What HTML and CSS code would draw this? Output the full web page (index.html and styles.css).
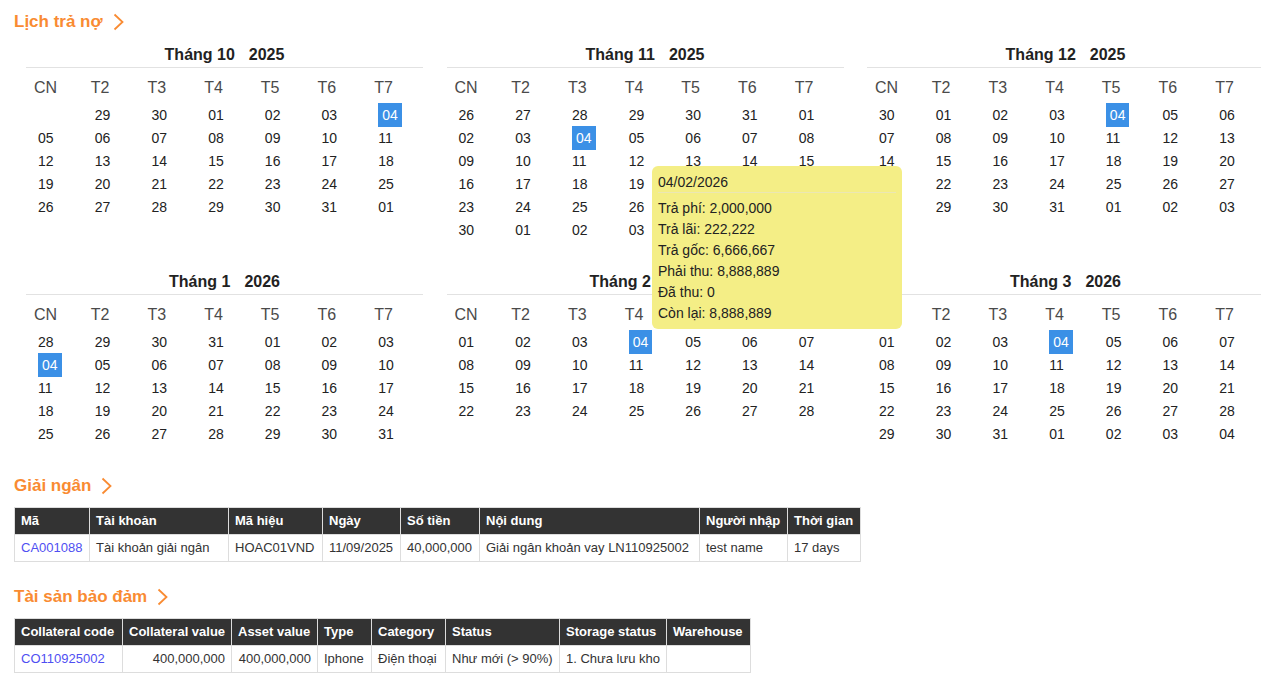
FILE: index.html
```html
<!DOCTYPE html>
<html lang="vi">
<head>
<meta charset="utf-8">
<title>Lịch trả nợ</title>
<link rel="stylesheet" href="styles.css">
</head>
<body>
<h2 class="sec-title">Lịch trả nợ <svg class="chev" width="11" height="18" viewBox="0 0 11 18"><polyline points="1.5,1.5 9.5,9 1.5,16.5" fill="none" stroke="currentColor" stroke-width="1.8"/></svg></h2>

<div class="cal-grid">
  <div class="month">
    <div class="m-title">Tháng 10<span class="yr">2025</span></div>
    <div class="wd"><span>CN</span><span>T2</span><span>T3</span><span>T4</span><span>T5</span><span>T6</span><span>T7</span></div>
    <div class="days">
      <span class="d"></span><span class="d">29</span><span class="d">30</span><span class="d">01</span><span class="d">02</span><span class="d">03</span><span class="d"><em class="hl">04</em></span>
      <span class="d">05</span><span class="d">06</span><span class="d">07</span><span class="d">08</span><span class="d">09</span><span class="d">10</span><span class="d">11</span>
      <span class="d">12</span><span class="d">13</span><span class="d">14</span><span class="d">15</span><span class="d">16</span><span class="d">17</span><span class="d">18</span>
      <span class="d">19</span><span class="d">20</span><span class="d">21</span><span class="d">22</span><span class="d">23</span><span class="d">24</span><span class="d">25</span>
      <span class="d">26</span><span class="d">27</span><span class="d">28</span><span class="d">29</span><span class="d">30</span><span class="d">31</span><span class="d">01</span>
    </div>
  </div>
  <div class="month">
    <div class="m-title">Tháng 11<span class="yr">2025</span></div>
    <div class="wd"><span>CN</span><span>T2</span><span>T3</span><span>T4</span><span>T5</span><span>T6</span><span>T7</span></div>
    <div class="days">
      <span class="d">26</span><span class="d">27</span><span class="d">28</span><span class="d">29</span><span class="d">30</span><span class="d">31</span><span class="d">01</span>
      <span class="d">02</span><span class="d">03</span><span class="d"><em class="hl">04</em></span><span class="d">05</span><span class="d">06</span><span class="d">07</span><span class="d">08</span>
      <span class="d">09</span><span class="d">10</span><span class="d">11</span><span class="d">12</span><span class="d">13</span><span class="d">14</span><span class="d">15</span>
      <span class="d">16</span><span class="d">17</span><span class="d">18</span><span class="d">19</span><span class="d">20</span><span class="d">21</span><span class="d">22</span>
      <span class="d">23</span><span class="d">24</span><span class="d">25</span><span class="d">26</span><span class="d">27</span><span class="d">28</span><span class="d">29</span>
      <span class="d">30</span><span class="d">01</span><span class="d">02</span><span class="d">03</span><span class="d">04</span><span class="d">05</span><span class="d">06</span>
    </div>
  </div>
  <div class="month">
    <div class="m-title">Tháng 12<span class="yr">2025</span></div>
    <div class="wd"><span>CN</span><span>T2</span><span>T3</span><span>T4</span><span>T5</span><span>T6</span><span>T7</span></div>
    <div class="days">
      <span class="d">30</span><span class="d">01</span><span class="d">02</span><span class="d">03</span><span class="d"><em class="hl">04</em></span><span class="d">05</span><span class="d">06</span>
      <span class="d">07</span><span class="d">08</span><span class="d">09</span><span class="d">10</span><span class="d">11</span><span class="d">12</span><span class="d">13</span>
      <span class="d">14</span><span class="d">15</span><span class="d">16</span><span class="d">17</span><span class="d">18</span><span class="d">19</span><span class="d">20</span>
      <span class="d">21</span><span class="d">22</span><span class="d">23</span><span class="d">24</span><span class="d">25</span><span class="d">26</span><span class="d">27</span>
      <span class="d">28</span><span class="d">29</span><span class="d">30</span><span class="d">31</span><span class="d">01</span><span class="d">02</span><span class="d">03</span>
    </div>
  </div>
  <div class="month">
    <div class="m-title">Tháng 1<span class="yr">2026</span></div>
    <div class="wd"><span>CN</span><span>T2</span><span>T3</span><span>T4</span><span>T5</span><span>T6</span><span>T7</span></div>
    <div class="days">
      <span class="d">28</span><span class="d">29</span><span class="d">30</span><span class="d">31</span><span class="d">01</span><span class="d">02</span><span class="d">03</span>
      <span class="d"><em class="hl">04</em></span><span class="d">05</span><span class="d">06</span><span class="d">07</span><span class="d">08</span><span class="d">09</span><span class="d">10</span>
      <span class="d">11</span><span class="d">12</span><span class="d">13</span><span class="d">14</span><span class="d">15</span><span class="d">16</span><span class="d">17</span>
      <span class="d">18</span><span class="d">19</span><span class="d">20</span><span class="d">21</span><span class="d">22</span><span class="d">23</span><span class="d">24</span>
      <span class="d">25</span><span class="d">26</span><span class="d">27</span><span class="d">28</span><span class="d">29</span><span class="d">30</span><span class="d">31</span>
    </div>
  </div>
  <div class="month">
    <div class="m-title">Tháng 2<span class="yr">2026</span></div>
    <div class="wd"><span>CN</span><span>T2</span><span>T3</span><span>T4</span><span>T5</span><span>T6</span><span>T7</span></div>
    <div class="days">
      <span class="d">01</span><span class="d">02</span><span class="d">03</span><span class="d"><em class="hl">04</em></span><span class="d">05</span><span class="d">06</span><span class="d">07</span>
      <span class="d">08</span><span class="d">09</span><span class="d">10</span><span class="d">11</span><span class="d">12</span><span class="d">13</span><span class="d">14</span>
      <span class="d">15</span><span class="d">16</span><span class="d">17</span><span class="d">18</span><span class="d">19</span><span class="d">20</span><span class="d">21</span>
      <span class="d">22</span><span class="d">23</span><span class="d">24</span><span class="d">25</span><span class="d">26</span><span class="d">27</span><span class="d">28</span>
    </div>
  </div>
  <div class="month">
    <div class="m-title">Tháng 3<span class="yr">2026</span></div>
    <div class="wd"><span>CN</span><span>T2</span><span>T3</span><span>T4</span><span>T5</span><span>T6</span><span>T7</span></div>
    <div class="days">
      <span class="d">01</span><span class="d">02</span><span class="d">03</span><span class="d"><em class="hl">04</em></span><span class="d">05</span><span class="d">06</span><span class="d">07</span>
      <span class="d">08</span><span class="d">09</span><span class="d">10</span><span class="d">11</span><span class="d">12</span><span class="d">13</span><span class="d">14</span>
      <span class="d">15</span><span class="d">16</span><span class="d">17</span><span class="d">18</span><span class="d">19</span><span class="d">20</span><span class="d">21</span>
      <span class="d">22</span><span class="d">23</span><span class="d">24</span><span class="d">25</span><span class="d">26</span><span class="d">27</span><span class="d">28</span>
      <span class="d">29</span><span class="d">30</span><span class="d">31</span><span class="d">01</span><span class="d">02</span><span class="d">03</span><span class="d">04</span>
    </div>
  </div>
</div>

<div class="tooltip">
  <div class="tt-date">04/02/2026</div>
  <div class="tt-line">Trả phí: 2,000,000</div>
  <div class="tt-line">Trả lãi: 222,222</div>
  <div class="tt-line">Trả gốc: 6,666,667</div>
  <div class="tt-line">Phải thu: 8,888,889</div>
  <div class="tt-line">Đã thu: 0</div>
  <div class="tt-line">Còn lại: 8,888,889</div>
</div>

<h2 class="sec-title">Giải ngân <svg class="chev" width="11" height="18" viewBox="0 0 11 18"><polyline points="1.5,1.5 9.5,9 1.5,16.5" fill="none" stroke="currentColor" stroke-width="1.8"/></svg></h2>
<table class="data disb">
  <colgroup><col class="c1"><col class="c2"><col class="c3"><col class="c4"><col class="c5"><col class="c6"><col class="c7"><col class="c8"></colgroup>
  <thead>
    <tr><th>Mã</th><th>Tài khoản</th><th>Mã hiệu</th><th>Ngày</th><th>Số tiền</th><th>Nội dung</th><th>Người nhập</th><th>Thời gian</th></tr>
  </thead>
  <tbody>
    <tr><td><a href="#">CA001088</a></td><td>Tài khoản giải ngân</td><td>HOAC01VND</td><td>11/09/2025</td><td>40,000,000</td><td>Giải ngân khoản vay LN110925002</td><td>test name</td><td>17 days</td></tr>
  </tbody>
</table>

<h2 class="sec-title sec-gap">Tài sản bảo đảm <svg class="chev" width="11" height="18" viewBox="0 0 11 18"><polyline points="1.5,1.5 9.5,9 1.5,16.5" fill="none" stroke="currentColor" stroke-width="1.8"/></svg></h2>
<table class="data coll">
  <colgroup><col class="c1"><col class="c2"><col class="c3"><col class="c4"><col class="c5"><col class="c6"><col class="c7"><col class="c8"></colgroup>
  <thead>
    <tr><th>Collateral code</th><th>Collateral value</th><th>Asset value</th><th>Type</th><th>Category</th><th>Status</th><th>Storage status</th><th>Warehouse</th></tr>
  </thead>
  <tbody>
    <tr><td><a href="#">CO110925002</a></td><td class="num">400,000,000</td><td class="num">400,000,000</td><td>Iphone</td><td>Điện thoại</td><td>Như mới (&gt; 90%)</td><td>1. Chưa lưu kho</td><td></td></tr>
  </tbody>
</table>
</body>
</html>
```

FILE: styles.css
```css
html, body {
  overflow-x: hidden;
}
body {
  margin: 0;
  padding: 12px 0 0 14px;
  position: relative;
  font-family: "Liberation Sans", Arial, sans-serif;
  color: #222;
  background: #fff;
}
.sec-title {
  margin: 0;
  display: flex;
  align-items: center;
  gap: 10px;
  font-size: 17px;
  line-height: 20px;
  font-weight: bold;
  color: #f98b32;
}
.chev {
  display: block;
}
.sec-gap {
  margin-top: 25px;
}
.cal-grid {
  display: grid;
  grid-template-columns: repeat(3, 397px);
  column-gap: 23.5px;
  row-gap: 31px;
  align-items: start;
  margin: 13px 0 31px 12px;
}
.m-title {
  height: 22px;
  line-height: 20px;
  text-align: center;
  font-size: 16px;
  font-weight: bold;
  color: #222;
  border-bottom: 1px solid #e2e2e2;
}
.yr {
  margin-left: 14px;
}
.wd {
  display: grid;
  grid-template-columns: repeat(7, 1fr);
  font-size: 16px;
  line-height: 20px;
  color: #4a4a4a;
}
.wd span {
  padding: 10px 0 5px 8px;
}
.days {
  display: grid;
  grid-template-columns: repeat(7, 1fr);
  grid-auto-rows: 23px;
  font-size: 14px;
  color: #222;
}
.d {
  display: flex;
  align-items: center;
  padding-left: 12px;
}
.hl {
  font-style: normal;
  background: #3b90e6;
  color: #fff;
  line-height: 16px;
  padding: 4px;
}
.tooltip {
  position: absolute;
  left: 652px;
  top: 166px;
  width: 250px;
  height: 163px;
  box-sizing: border-box;
  padding: 6px 6px 0 6px;
  background: #f4ee86;
  border-radius: 6px;
  font-size: 14px;
  color: #222;
}
.tt-date {
  line-height: 20px;
  border-bottom: 1px solid #ebe7b4;
  margin-bottom: 5px;
}
.tt-line {
  line-height: 21px;
}
.data {
  margin-top: 11px;
  border-collapse: collapse;
  table-layout: fixed;
  font-size: 13px;
  line-height: 16px;
  border: 1px solid #ddd;
}
.data th,
.data td {
  border: 1px solid #ddd;
  padding: 5px 6px;
  text-align: left;
  white-space: nowrap;
  overflow: hidden;
}
.data th {
  background: #333;
  color: #fff;
  font-weight: bold;
}
.data td {
  color: #333;
}
.data td.num {
  text-align: right;
}
.data a {
  color: #4f4ff2;
  text-decoration: none;
}
.disb { width: 846px; }
.disb .c1 { width: 75px; }
.disb .c2 { width: 139px; }
.disb .c3 { width: 94px; }
.disb .c4 { width: 78px; }
.disb .c5 { width: 79px; }
.disb .c6 { width: 220px; }
.disb .c7 { width: 88px; }
.disb .c8 { width: 73px; }
.coll { width: 736px; }
.coll .c1 { width: 108px; }
.coll .c2 { width: 109px; }
.coll .c3 { width: 86px; }
.coll .c4 { width: 54px; }
.coll .c5 { width: 74px; }
.coll .c6 { width: 114px; }
.coll .c7 { width: 107px; }
.coll .c8 { width: 84px; }
```
